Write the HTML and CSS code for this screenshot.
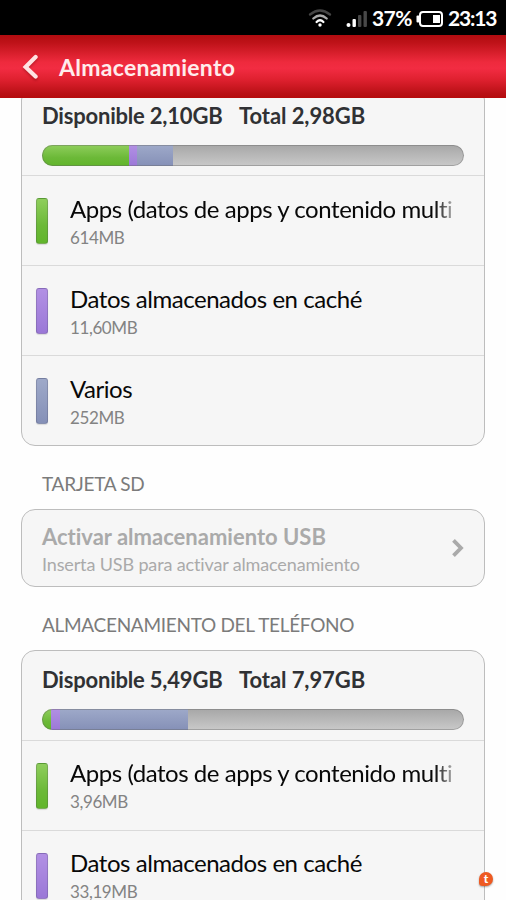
FILE: index.html
```html
<!DOCTYPE html>
<html lang="es">
<head>
<meta charset="utf-8">
<title>Almacenamiento</title>
<link rel="stylesheet" href="styles.css">
</head>
<body>
<div class="status">
  <svg class="wifi" width="24" height="20" viewBox="0 0 24 20" fill="none" stroke-width="2.3" stroke-linecap="round">
    <path d="M2 6.5Q12-1.5 22 6.5" stroke="#454545"/>
    <path d="M5.3 10.5Q12 4.5 18.7 10.5" stroke="#aaa"/>
    <path d="M8.6 14Q12 10.5 15.4 14" stroke="#fff"/>
    <circle cx="12" cy="17" r="1.7" fill="#fff"/>
  </svg>
  <svg class="signal" width="22" height="18" viewBox="0 0 22 18">
    <circle cx="2.5" cy="15" r="2" fill="#fff"/>
    <rect x="6.5" y="9" width="3.4" height="8" rx="1" fill="#fff"/>
    <rect x="12" y="5" width="3.4" height="12" rx="1" fill="#484848"/>
    <rect x="17.5" y="1" width="3.4" height="16" rx="1" fill="#484848"/>
  </svg>
  <span class="percent">37%</span>
  <svg class="battery" width="28" height="18" viewBox="0 0 28 18">
    <rect x="4" y="2" width="22" height="14" rx="3" fill="none" stroke="#fff" stroke-width="2"/>
    <rect x="0.5" y="5.5" width="3" height="7" rx="1" fill="#fff"/>
    <rect x="17" y="5" width="7" height="8" fill="#fff"/>
  </svg>
  <span class="clock">23:13</span>
</div>
<header class="header">
  <svg class="back" width="18" height="28" viewBox="0 0 18 28" fill="none" stroke="#ffe3e3" stroke-width="4.2" stroke-linecap="round" stroke-linejoin="miter"><path d="M15.6 4L5.6 14L15.6 23.6"/></svg>
  <h1>Almacenamiento</h1>
</header>
<main class="content">
  <section class="card card-first">
    <div class="summary">
      <div class="totals"><span class="free">Disponible 2,10GB</span><span class="total">Total 2,98GB</span></div>
      <div class="bar"><i class="green" style="width:87px"></i><i class="purple" style="width:8px"></i><i class="blue" style="width:36px"></i></div>
    </div>
    <div class="row"><i class="chip green"></i><div class="text"><p class="name fade">Apps (datos de apps y contenido multi</p><p class="size">614MB</p></div></div>
    <div class="row"><i class="chip purple"></i><div class="text"><p class="name">Datos almacenados en caché</p><p class="size">11,60MB</p></div></div>
    <div class="row"><i class="chip blue"></i><div class="text"><p class="name">Varios</p><p class="size">252MB</p></div></div>
  </section>
  <h2 class="label">TARJETA SD</h2>
  <section class="card usb">
    <div>
      <p class="usb-name">Activar almacenamiento USB</p>
      <p class="usb-hint">Inserta USB para activar almacenamiento</p>
    </div>
    <svg width="14" height="20" viewBox="0 0 14 20" fill="none" stroke="#aaa" stroke-width="3.8"><path d="M2.5 2.3L10 10L2.5 17.7"/></svg>
  </section>
  <h2 class="label">ALMACENAMIENTO DEL TELÉFONO</h2>
  <section class="card card-phone">
    <div class="summary">
      <div class="totals"><span class="free">Disponible 5,49GB</span><span class="total">Total 7,97GB</span></div>
      <div class="bar"><i class="green" style="width:9px"></i><i class="purple" style="width:9px"></i><i class="blue" style="width:128px"></i></div>
    </div>
    <div class="row"><i class="chip green"></i><div class="text"><p class="name fade">Apps (datos de apps y contenido multi</p><p class="size">3,96MB</p></div></div>
    <div class="row"><i class="chip purple"></i><div class="text"><p class="name">Datos almacenados en caché</p><p class="size">33,19MB</p></div></div>
  </section>
</main>
<div class="badge">t</div>
</body>
</html>
```
FILE: styles.css
```css
* { box-sizing: border-box; margin: 0; padding: 0; }
body { width: 506px; height: 900px; overflow: hidden; display: flex; flex-direction: column; background: #fefefe; font-family: Lato, "Open Sans", sans-serif; font-variant-ligatures: none; position: relative; }
p, h1, h2, .totals, .status { white-space: nowrap; }
svg, i { display: block; flex: none; }
.status { height: 35px; flex: none; background: #000; color: #fff; display: flex; align-items: center; padding-left: 308px; font-size: 21px; font-weight: 700; line-height: 37px; }
.wifi { margin-top: 1px; }
.signal { margin: 2px 4px 0 14px; }
.percent { width: 42px; letter-spacing: -0.6px; }
.battery { margin: 2px 0 0 2px; }
.clock { margin-left: 4px; letter-spacing: -1.2px; }
.header { height: 63px; flex: none; display: flex; align-items: center; padding-left: 20px; background: linear-gradient(#b20c10 0, #be1218 12%, #ee2a3d 43%, #f22c42 53%, #e02130 70%, #b91015 93%, #b50b0d 100%); }
.back { margin-right: 21px; filter: drop-shadow(0 2px 1px rgba(90,0,0,.3)); }
h1 { font-size: 23px; font-weight: 700; letter-spacing: 0.28px; color: #ffecec; line-height: 30px; }
.content { flex: 1; min-height: 0; overflow: hidden; padding: 0 21px; display: flex; flex-direction: column; }
.card { flex: none; width: 464px; border: 1px solid #bdbdbd; border-radius: 14px; background: #f6f6f6; }
.card-first { margin-top: -12px; height: 360px; }
.summary { height: 89px; border-bottom: 1px solid #dadada; padding: 14px 20px 0; }
.card-phone .summary { height: 90px; }
.totals { display: flex; height: 30px; line-height: 30px; font-size: 22px; font-weight: 700; letter-spacing: -0.2px; color: #303134; }
.free { width: 197px; }
.total { letter-spacing: -0.08px; }
.bar { margin-top: 14px; height: 21px; width: 422px; border-radius: 11px; overflow: hidden; display: flex; position: relative; background: linear-gradient(#a7a7a7, #c9c9c9); }
.bar::after { content: ""; position: absolute; inset: 0; border-radius: 11px; border: 1px solid rgba(100,100,100,.4); }
.green { background: linear-gradient(#8fce5c, #6cb938 60%, #61b52b); }
.purple { background: linear-gradient(#b290e4, #9b78d7); }
.blue { background: linear-gradient(#9ea9c9, #8590b7); }
.row { height: 90px; border-bottom: 1px solid #dadada; display: flex; padding-left: 14px; }
.row:last-child { border-bottom: 0; }
.chip { width: 12px; height: 46px; margin-top: 22px; border-radius: 3px; border: 1px solid rgba(60,60,80,.22); box-shadow: 0 1px 1px rgba(0,0,0,.12); }
.text { margin-left: 22px; width: 386px; padding-top: 17px; }
.name { height: 32px; line-height: 31px; font-size: 24px; letter-spacing: -0.45px; color: #080808; }
.card-phone .text { padding-top: 16px; }
.fade { -webkit-mask-image: linear-gradient(90deg, #000 365px, transparent 390px); mask-image: linear-gradient(90deg, #000 365px, transparent 390px); }
.size { height: 24px; line-height: 26px; font-size: 17px; letter-spacing: -0.4px; color: #838383; }
.label { height: 63px; flex: none; padding: 24px 0 0 21px; font-size: 19px; line-height: 28px; font-weight: 400; letter-spacing: -0.3px; color: #7b7b7b; }
.label + .card-phone { margin-top: 0; }
.usb { height: 78px; display: flex; justify-content: space-between; align-items: center; padding: 0 19px 0 20px; }
.usb-name { padding-top: 2px; font-size: 22px; line-height: 30px; font-weight: 700; color: #aaa; }
.usb-hint { font-size: 18px; line-height: 25px; letter-spacing: -0.14px; color: #aaa; }
.badge { position: absolute; left: 479px; top: 872px; width: 14px; height: 14px; border-radius: 50% 50% 50% 25%; background: #ee5a22; color: #fff; font-size: 12px; line-height: 13px; font-weight: 900; text-align: center; box-shadow: 0 1px 2px rgba(0,0,0,.35); }
```
